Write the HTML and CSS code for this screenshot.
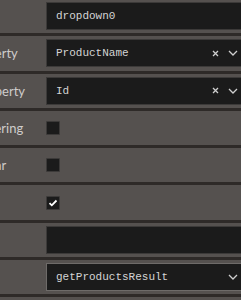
FILE: index.html
```html
<!DOCTYPE html>
<html lang="en">
<head>
  <meta charset="UTF-8" />
  <meta name="viewport" content="width=device-width, initial-scale=1.0"/>
  <title>Properties</title>
  <link rel="stylesheet" href="styles.css">
</head>
<body>
  <div class="props">
    <div class="row">
      <span class="label">Name</span>
      <div class="field"><span class="value">dropdown0</span></div>
    </div>
    <div class="row">
      <span class="label">TextProperty</span>
      <div class="field">
        <span class="value">ProductName</span>
        <span class="icons">
          <svg class="clear" width="7" height="7" viewBox="0 0 7 7"><path d="M1 1L6 6M6 1L1 6" /></svg>
          <svg class="chev" width="10" height="6" viewBox="0 0 10 6"><path d="M1 1L5 5L9 1" /></svg>
        </span>
      </div>
    </div>
    <div class="row">
      <span class="label">ValueProperty</span>
      <div class="field">
        <span class="value">Id</span>
        <span class="icons">
          <svg class="clear" width="7" height="7" viewBox="0 0 7 7"><path d="M1 1L6 6M6 1L1 6" /></svg>
          <svg class="chev" width="10" height="6" viewBox="0 0 10 6"><path d="M1 1L5 5L9 1" /></svg>
        </span>
      </div>
    </div>
    <div class="row">
      <span class="label">AllowFiltering</span>
      <span class="check"></span>
    </div>
    <div class="row">
      <span class="label">AllowClear</span>
      <span class="check"></span>
    </div>
    <div class="row">
      <span class="label">Visible</span>
      <span class="check checked">
        <svg width="10" height="8" viewBox="0 0 10 8"><path d="M1.5 4.2L3.8 6.3L8.5 1.5" /></svg>
      </span>
    </div>
    <div class="row">
      <span class="label">Style</span>
      <div class="field"></div>
    </div>
    <div class="row">
      <span class="label">Data</span>
      <div class="field select">
        <span class="value">getProductsResult</span>
        <span class="icons">
          <svg class="chev" width="10" height="6" viewBox="0 0 10 6"><path d="M1 1L5 5L9 1" /></svg>
        </span>
      </div>
    </div>
  </div>
</body>
</html>
```

FILE: styles.css
```css
* {
  box-sizing: border-box;
}

body {
  margin: 0;
  background: #55514f;
  font-family: 'Lato', sans-serif;
  overflow: hidden;
}

.props {
  margin: -1px -4px 0 -56px;
}

.row {
  display: flex;
  align-items: center;
  height: 37.3px;
  border-bottom: 3px solid #2e2a28;
  background: #55514f;
}

.label {
  width: 102px;
  flex-shrink: 0;
  font-size: 13px;
  color: #cfcccb;
  white-space: nowrap;
}

.field {
  flex: 1;
  height: 28px;
  display: flex;
  align-items: center;
  padding: 0 6px 0 9px;
  background: #1b1b1b;
  border: 1px solid #3c3a39;
  font-family: 'Liberation Mono', monospace;
  font-size: 11px;
  color: #d4d4d4;
}

.field.select {
  border-color: #6e6b69;
}

.icons {
  margin-left: auto;
  display: flex;
  align-items: center;
  gap: 9px;
}

.icons svg path {
  fill: none;
  stroke: #cfcfcf;
  stroke-width: 1.3;
}

.check {
  width: 14px;
  height: 14px;
  background: #1b1b1b;
  border: 1px solid #3c3a39;
  border-radius: 1px;
  display: flex;
  align-items: center;
  justify-content: center;
}

.check svg path {
  fill: none;
  stroke: #ffffff;
  stroke-width: 1.8;
}
```
